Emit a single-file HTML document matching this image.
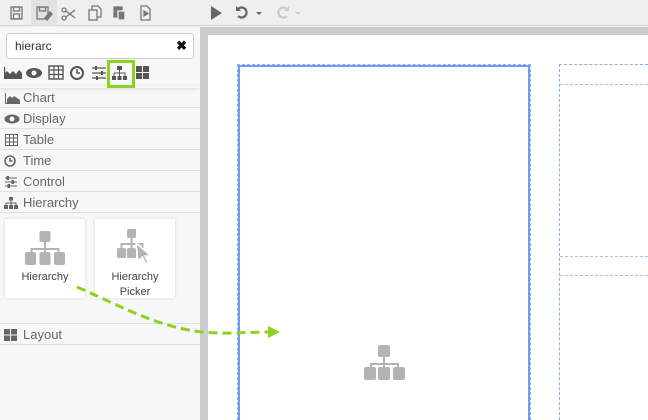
<!DOCTYPE html>
<html><head><style>
*{box-sizing:border-box;margin:0;padding:0}
html,body{width:648px;height:420px;overflow:hidden}
body{background:#efefef;font-family:"Liberation Sans",sans-serif;position:relative}
.abs{position:absolute}
.tb{left:0;top:0;width:648px;height:26px;background:#efefef;border-bottom:1px solid #d6d6d6}
.panel{left:0;top:27px;width:200px;height:393px;background:#f7f7f7}
.gray{left:200px;top:27px;width:448px;height:393px;background:#cccccc}
.canvas{left:208px;top:35px;width:440px;height:385px;background:#fff}
.row{position:absolute;left:0;width:200px;height:21px;border-bottom:1px solid #e0e0e0;font-size:13px;color:#666;line-height:21px;padding-left:23px}
.row svg{position:absolute;left:4px;top:5px}
.card{position:absolute;top:219px;width:80px;height:79px;background:#fff;box-shadow:0 0 3px rgba(0,0,0,.12);font-size:11px;color:#444;text-align:center}
</style></head><body>
<div class="abs tb"></div>
<div class="abs" style="left:31px;top:0;width:26px;height:26px;background:#e2e2e2"></div>
<svg class="abs" style="left:0;top:0" width="330" height="26" fill="none" stroke="#777" stroke-width="1.3">
<rect x="11" y="7" width="11" height="12"/><rect x="13.5" y="7" width="6" height="4"/><rect x="13.5" y="14" width="6" height="5"/>
<rect x="37" y="7" width="11" height="12"/><rect x="39.5" y="7" width="6" height="4"/><path d="M45 18l5-6 2 2-5 6z" fill="#777"/>
<circle cx="64" cy="18" r="2"/><circle cx="64" cy="10" r="2"/><path d="M66 17l9-7M66 11l9 7"/>
<rect x="89" y="10" width="8" height="10"/><path d="M92 10V6h6l3 3v8h-4"/>
<rect x="114" y="7" width="8" height="10" fill="#777"/><rect x="118" y="11" width="7" height="9" fill="#777" stroke="#efefef"/>
<path d="M141 6h6l3 3v11h-9z"/><path d="M144 11l4 2.5-4 2.5z" fill="#777"/>
<path d="M211 6l11 7-11 7z" fill="#666" stroke="none"/>
<path d="M238 9a5 5 0 1 1 0 7" stroke="#666" stroke-width="2.2"/><path d="M236 6v5h5z" fill="#666" stroke="none"/><path d="M256 12h6l-3 3z" fill="#666" stroke="none"/>
<path d="M287 9a5 5 0 1 0 0 7" stroke="#ccc" stroke-width="2.2"/><path d="M289 6v5h-5z" fill="#ccc" stroke="none"/><path d="M295 12h6l-3 3z" fill="#ccc" stroke="none"/>
</svg>
<div class="abs panel"></div>
<div class="abs gray"></div>
<div class="abs canvas"></div>
<div class="abs" style="left:6px;top:33px;width:188px;height:26px;background:#fff;border:1px solid #ccc;border-radius:3px;font-size:12px;color:#333;line-height:24px;padding-left:8px">hierarc<span style="position:absolute;right:6px;top:0;font-weight:bold;font-size:13px;color:#111">✖</span></div>
<div class="abs" style="left:0;top:86px;width:200px;height:2px;box-shadow:0 1px 3px rgba(0,0,0,.15)"></div>
<div class="abs" style="left:107px;top:60px;width:28px;height:28px;border:3px solid #8fd11e"></div>
<svg class="abs" style="left:0;top:60px" width="160" height="26" fill="#555">
<path d="M5 19V7M5 19h17V13l-3-3-3 4-3-3-3 3-3-3-2 2z"/><rect x="4" y="7" width="1.2" height="12"/>
<ellipse cx="34" cy="13" rx="8" ry="5" /><circle cx="34" cy="13" r="2.5" fill="#fff"/>
<rect x="49" y="6" width="14" height="13" fill="none" stroke="#555" stroke-width="1.4"/><path d="M49 10h14M49 14.5h14M54 6v13M58.5 6v13" stroke="#555" stroke-width="1.2"/>
<circle cx="77" cy="13" r="6" fill="none" stroke="#555" stroke-width="2"/><path d="M77 9v4h3" stroke="#555" stroke-width="1.5" fill="none"/>
<path d="M92 8h14M92 13h14M92 18h14" stroke="#555" stroke-width="1.3"/><rect x="95" y="6" width="2" height="4"/><rect x="101" y="11" width="2" height="4"/><rect x="96" y="16" width="2" height="4"/>
<rect x="117" y="6" width="5" height="4"/><path d="M119.5 10v3M114 13h11v3M114 13v3M119.5 13v3" stroke="#555" fill="none"/><rect x="112" y="16" width="4" height="4"/><rect x="117.5" y="16" width="4" height="4"/><rect x="123" y="16" width="4" height="4"/>
<rect x="136" y="6" width="6" height="6"/><rect x="143" y="6" width="6" height="6"/><rect x="136" y="13" width="6" height="6"/><rect x="143" y="13" width="6" height="6"/>
</svg>
<div class="row" style="top:88px;height:20px;line-height:20px">Chart<svg width="16" height="12" fill="#666"><path d="M1 11V0h1v10h14v1zM3 10V6l3-3 2 2 2-2 3 2 3 2v3z"/></svg></div>
<div class="row" style="top:108px">Display<svg width="16" height="12" fill="#666"><ellipse cx="8" cy="6" rx="7.5" ry="4.5"/><circle cx="8" cy="6" r="2.5" fill="#f7f7f7"/></svg></div>
<div class="row" style="top:129px">Table<svg width="16" height="12" fill="none" stroke="#666"><rect x="1.5" y="0.5" width="12" height="11"/><path d="M1.5 4h12M1.5 8h12M5.5 0.5v11M9.5 0.5v11"/></svg></div>
<div class="row" style="top:150px">Time<svg width="16" height="12" fill="none" stroke="#666" stroke-width="1.6"><circle cx="6" cy="6" r="5"/><path d="M6 3v3h2.5"/></svg></div>
<div class="row" style="top:171px">Control<svg width="16" height="12" stroke="#666" fill="#666"><path d="M1 2h12M1 6h12M1 10h12"/><rect x="3" y="0.5" width="1.5" height="3"/><rect x="8" y="4.5" width="1.5" height="3"/><rect x="4" y="8.5" width="1.5" height="3"/></svg></div>
<div class="row" style="top:192px">Hierarchy<svg width="16" height="12" fill="#666"><rect x="5" y="0" width="4" height="3.5"/><path d="M6.5 3.5h1v2h5V8h-1V6.5h-4V8h-1V6.5h-4V8h-1V5.5h5z"/><rect x="0" y="8" width="4" height="4"/><rect x="5" y="8" width="4" height="4"/><rect x="10" y="8" width="4" height="4"/></svg></div>
<div class="row" style="top:323px;border-top:1px solid #e0e0e0;height:22px">Layout<svg width="16" height="12" fill="#666"><rect x="0" y="0" width="6" height="5.5"/><rect x="7" y="0" width="6" height="5.5"/><rect x="0" y="6.5" width="6" height="5.5"/><rect x="7" y="6.5" width="6" height="5.5"/></svg></div>
<div class="card" style="left:5px"><svg style="position:absolute;left:19px;top:12px" width="42" height="36" fill="#b3b3b3"><rect x="15.5" y="0" width="11" height="11" rx="2"/><path d="M20 11h2v6h13.5v6h-2v-4h-11.5v4h-2v-4h-11.5v4h-2v-6h13.5z"/><rect x="1" y="21" width="11" height="13" rx="2"/><rect x="15.5" y="21" width="11" height="13" rx="2"/><rect x="30" y="21" width="11" height="13" rx="2"/></svg><div style="position:absolute;top:52px;width:100%">Hierarchy</div></div>
<div class="card" style="left:95px"><svg style="position:absolute;left:20px;top:10px" width="42" height="36" fill="#b3b3b3"><rect x="12" y="0" width="9" height="9" rx="1.5"/><path d="M15.5 9h2v5h11v5h-2v-3h-9v3h-2v-3h-8v3h-2v-5h10z"/><rect x="2" y="19" width="9" height="10" rx="1.5"/><rect x="12" y="19" width="9" height="10" rx="1.5"/><path d="M21 14l15 13-6 0 3 7-2.5 1-3-7-4.5 4z" stroke="#fff" stroke-width="1.5"/></svg><div style="position:absolute;top:51px;width:100%;line-height:15px">Hierarchy<br>Picker</div></div>
<div class="abs" style="left:237px;top:64px;width:294px;height:356px;border:1px dashed #8aaeee;border-bottom:none"></div>
<div class="abs" style="left:238px;top:65px;width:292px;height:355px;border:2px solid #6e9cee;border-bottom:none"></div>
<div class="abs" style="left:559px;top:64px;width:89px;height:356px;border-left:1px dashed #8aaeee;border-top:1px dashed #8aaeee"></div>
<div class="abs" style="left:560px;top:84px;width:88px;border-top:1px dashed #a8c2f0"></div>
<div class="abs" style="left:560px;top:256px;width:88px;border-top:1px dashed #a8c2f0"></div>
<div class="abs" style="left:560px;top:275px;width:88px;border-top:1px dashed #a8c2f0"></div>
<svg class="abs" style="left:362px;top:344px" width="44" height="38" fill="#b3b3b3"><rect x="16" y="1" width="12" height="12" rx="2"/><path d="M21 13h2v6h14v6h-2v-4h-12v4h-2v-4h-11v4h-2v-6h13z"/><rect x="2" y="23" width="12" height="13" rx="2"/><rect x="16" y="23" width="12" height="13" rx="2"/><rect x="31" y="23" width="12" height="13" rx="2"/></svg>
<svg class="abs" style="left:0;top:0" width="648" height="420"><path d="M77 287C130 310 170 335 230 333L268 332" fill="none" stroke="#8fd11e" stroke-width="3" stroke-dasharray="9,5"/><path d="M268 326l12 6-12 6z" fill="#8fd11e"/></svg>
</body></html>
